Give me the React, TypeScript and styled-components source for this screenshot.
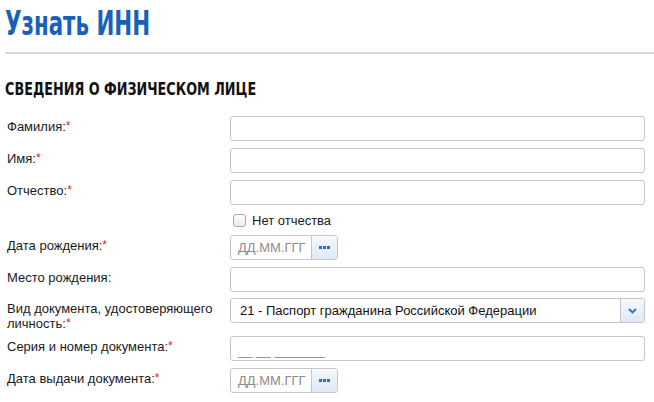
import React from 'react';
import styled, { createGlobalStyle } from 'styled-components';

const GlobalStyle = createGlobalStyle`
  html, body {
    margin: 0;
    padding: 0;
    background: #fff;
  }
  body {
    font-family: "Liberation Sans", Arial, sans-serif;
    font-size: 13px;
    color: #1a1a1a;
  }
`;

const Page = styled.div`
  width: 654px;
  height: 402px;
  overflow: hidden;
  padding: 0 0 0 5px;
  box-sizing: border-box;
`;

const Title = styled.h1`
  margin: 0;
  padding-top: 5px;
  height: 54px;
  box-sizing: border-box;
  border-bottom: 2px solid #d2dae6;
  font-family: "DejaVu Sans Condensed", "DejaVu Sans", sans-serif;
  font-weight: bold;
  font-size: 33px;
  line-height: 38px;
  color: #1762b8;
  white-space: nowrap;

  span {
    display: inline-block;
    transform: scaleX(0.72);
    transform-origin: left center;
  }
`;

const Section = styled.h2`
  margin: 0;
  padding-top: 25px;
  height: 62px;
  box-sizing: border-box;
  font-family: "DejaVu Sans Condensed", "DejaVu Sans", sans-serif;
  font-weight: bold;
  font-size: 18px;
  line-height: 20px;
  color: #111;
  white-space: nowrap;

  span {
    display: inline-block;
    transform: scaleX(0.79);
    transform-origin: left center;
  }
`;

const Form = styled.div`
  display: flex;
  flex-direction: column;
  padding-left: 2px;
`;

const Row = styled.div<{ $gap?: number }>`
  display: grid;
  grid-template-columns: 223px 415px;
  margin-bottom: ${p => p.$gap ?? 7}px;
`;

const Label = styled.div`
  padding-top: 3px;
  line-height: 15px;
  color: #1a1a1a;
  padding-right: 10px;
`;

const Star = styled.span`
  display: inline-block;
  color: #e3202a;
  font-size: 12px;
  line-height: 12px;
  vertical-align: top;
  margin-top: 1px;
`;

const Input = styled.div`
  height: 25px;
  box-sizing: border-box;
  border: 1px solid #c6c6c6;
  border-radius: 3px;
  background: #fff;
  display: flex;
  align-items: center;
  overflow: hidden;
`;

const MaskInput = styled(Input)`
  align-items: flex-end;
`;

const Mask = styled.span`
  padding: 0 0 2px 7px;
  line-height: 14px;
  color: #8a8a8a;
  font-size: 13px;
`;

const DateBox = styled.div`
  display: flex;
  width: 108px;
  height: 25px;
  box-sizing: border-box;
  border: 1px solid #c6c6c6;
  border-radius: 3px;
  overflow: hidden;
`;

const DateText = styled.div`
  flex: 1;
  padding-left: 7px;
  line-height: 23px;
  color: #8c8c8c;
`;

const SideButton = styled.div<{ $w: number }>`
  width: ${p => p.$w}px;
  align-self: stretch;
  border-left: 1px solid #c6c6c6;
  background: linear-gradient(#f6f9fd, #dfe8f5);
  display: flex;
  align-items: center;
  justify-content: center;
`;

const SelectText = styled.div`
  flex: 1;
  padding-left: 9px;
  color: #111;
`;

const CheckRow = styled.label`
  display: flex;
  align-items: center;
  gap: 6px;
  height: 16px;
  padding-left: 3px;
  color: #1a1a1a;
`;

const Check = styled.span`
  width: 11px;
  height: 11px;
  border: 1px solid #a9a9a9;
  border-radius: 3px;
  background: linear-gradient(#fdfdfd, #ececec);
`;

const Dots = () => (
  <svg width="11" height="3" viewBox="0 0 11 3">
    <rect x="0" y="0" width="3" height="3" fill="#2a6fc4" />
    <rect x="4" y="0" width="3" height="3" fill="#2a6fc4" />
    <rect x="8" y="0" width="3" height="3" fill="#2a6fc4" />
  </svg>
);

const Chevron = () => (
  <svg width="9" height="6" viewBox="0 0 9 6">
    <path d="M1 1 L4.5 4.5 L8 1" fill="none" stroke="#2a6fc4" strokeWidth="1.8" />
  </svg>
);

const DateField = () => (
  <DateBox>
    <DateText>ДД.ММ.ГГГ</DateText>
    <SideButton $w={25}>
      <Dots />
    </SideButton>
  </DateBox>
);

const Req = () => <Star>*</Star>;

export default function App() {
  return (
    <>
      <GlobalStyle />
      <Page>
        <Title><span>Узнать ИНН</span></Title>
        <Section><span>СВЕДЕНИЯ О ФИЗИЧЕСКОМ ЛИЦЕ</span></Section>
        <Form>
          <Row>
            <Label>Фамилия:<Req /></Label>
            <Input />
          </Row>
          <Row>
            <Label>Имя:<Req /></Label>
            <Input />
          </Row>
          <Row>
            <Label>Отчество:<Req /></Label>
            <Input />
          </Row>
          <Row>
            <div />
            <CheckRow>
              <Check />
              Нет отчества
            </CheckRow>
          </Row>
          <Row>
            <Label>Дата рождения:<Req /></Label>
            <DateField />
          </Row>
          <Row $gap={6}>
            <Label>Место рождения:</Label>
            <Input />
          </Row>
          <Row $gap={5}>
            <Label>
              Вид документа, удостоверяющего
              <br />
              личность:<Req />
            </Label>
            <Input>
              <SelectText>21 - Паспорт гражданина Российской Федерации</SelectText>
              <SideButton $w={23}>
                <Chevron />
              </SideButton>
            </Input>
          </Row>
          <Row>
            <Label>Серия и номер документа:<Req /></Label>
            <MaskInput>
              <Mask>__ __ _______</Mask>
            </MaskInput>
          </Row>
          <Row>
            <Label>Дата выдачи документа:<Req /></Label>
            <DateField />
          </Row>
        </Form>
      </Page>
    </>
  );
}
